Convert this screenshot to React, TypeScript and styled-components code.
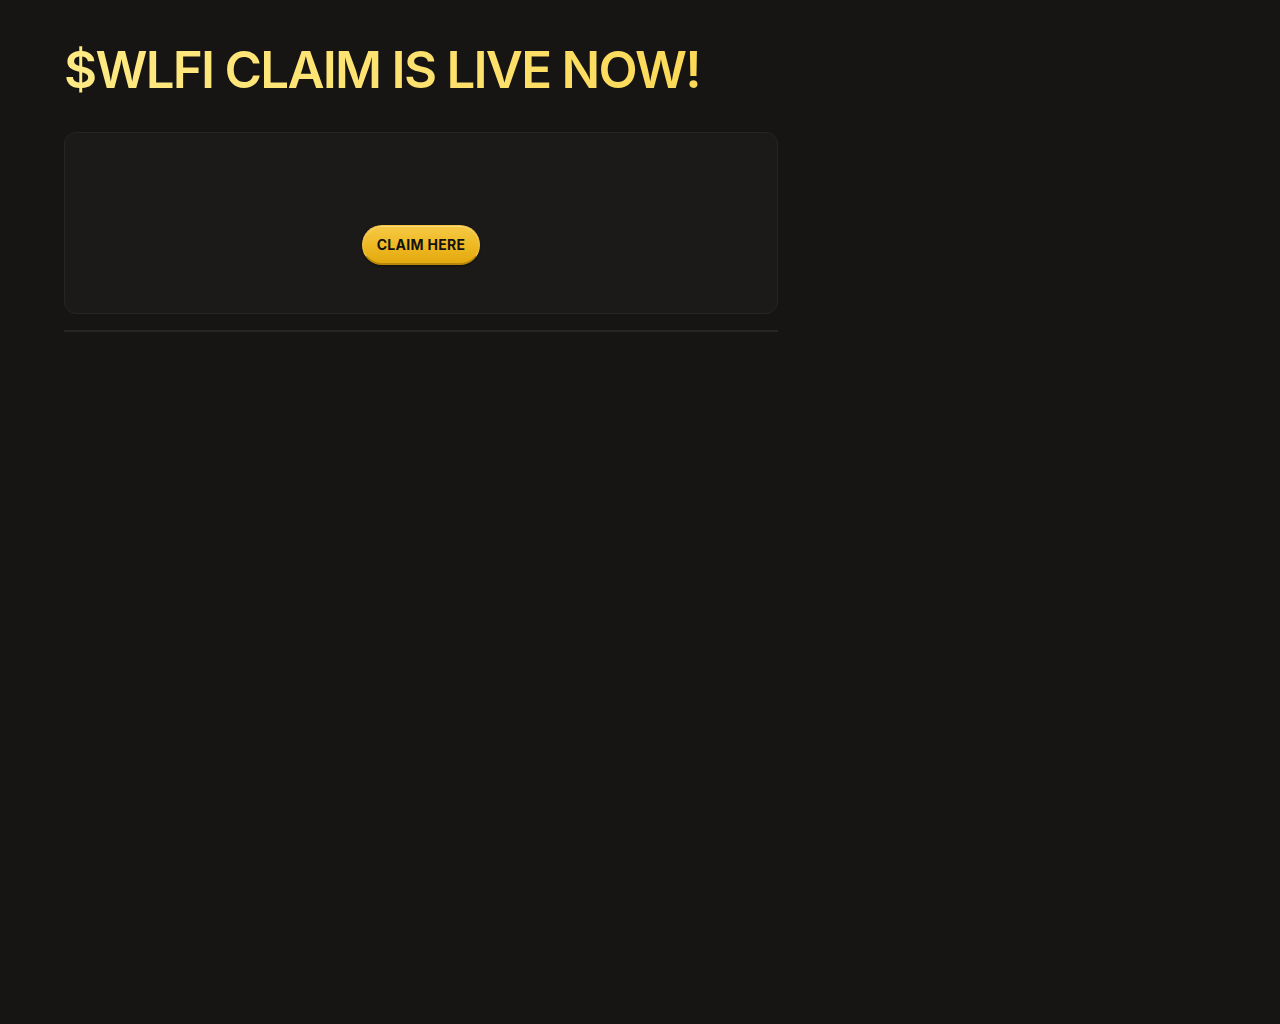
import React from "react";
import styled, { createGlobalStyle } from "styled-components";

const Global = createGlobalStyle`
  html, body { margin: 0; padding: 0; background: #161514; }
  body { font-family: Inter, "Noto Sans", sans-serif; min-height: 1024px; }
`;

const Page = styled.main`
  padding: 40px 64px;
  width: 714px;
  display: flex;
  flex-direction: column;
`;

const Title = styled.h1`
  margin: 0;
  font-family: Inter, "Noto Sans", sans-serif;
  font-weight: 600;
  font-size: 51px;
  line-height: 60px;
  letter-spacing: -1.75px;
  background: linear-gradient(90deg, #fee983 0%, #fde06a 60%, #fbd74f 100%);
  -webkit-background-clip: text;
  background-clip: text;
  color: transparent;
  white-space: nowrap;
`;

const Card = styled.section`
  margin-top: 32px;
  height: 182px;
  box-sizing: border-box;
  border: 1px solid #262524;
  border-radius: 12px;
  background: #1b1a19;
  display: flex;
  align-items: center;
  justify-content: center;
  padding-top: 44px;
`;

const ClaimButton = styled.button`
  height: 40px;
  width: 118px;
  border-radius: 20px;
  border: 1px solid #f2c544;
  border-bottom: 2px solid #b8860b;
  background: linear-gradient(180deg, #f6c945 0%, #eeb822 55%, #e3a90f 100%);
  box-shadow: inset 0 1px 0 rgba(255, 240, 180, 0.5), 0 1px 2px rgba(0, 0, 0, 0.4);
  font-family: Inter, "Noto Sans", sans-serif;
  font-weight: 700;
  font-size: 14px;
  color: #141210;
  letter-spacing: 0.3px;
  cursor: pointer;
  padding: 0;
`;

const Divider = styled.hr`
  margin: 16px 0 0;
  border: none;
  height: 2px;
  background: #262524;
`;

export default function App() {
  return (
    <>
      <Global />
      <Page>
        <Title>$WLFI CLAIM IS LIVE NOW!</Title>
        <Card>
          <ClaimButton>CLAIM HERE</ClaimButton>
        </Card>
        <Divider />
      </Page>
    </>
  );
}
